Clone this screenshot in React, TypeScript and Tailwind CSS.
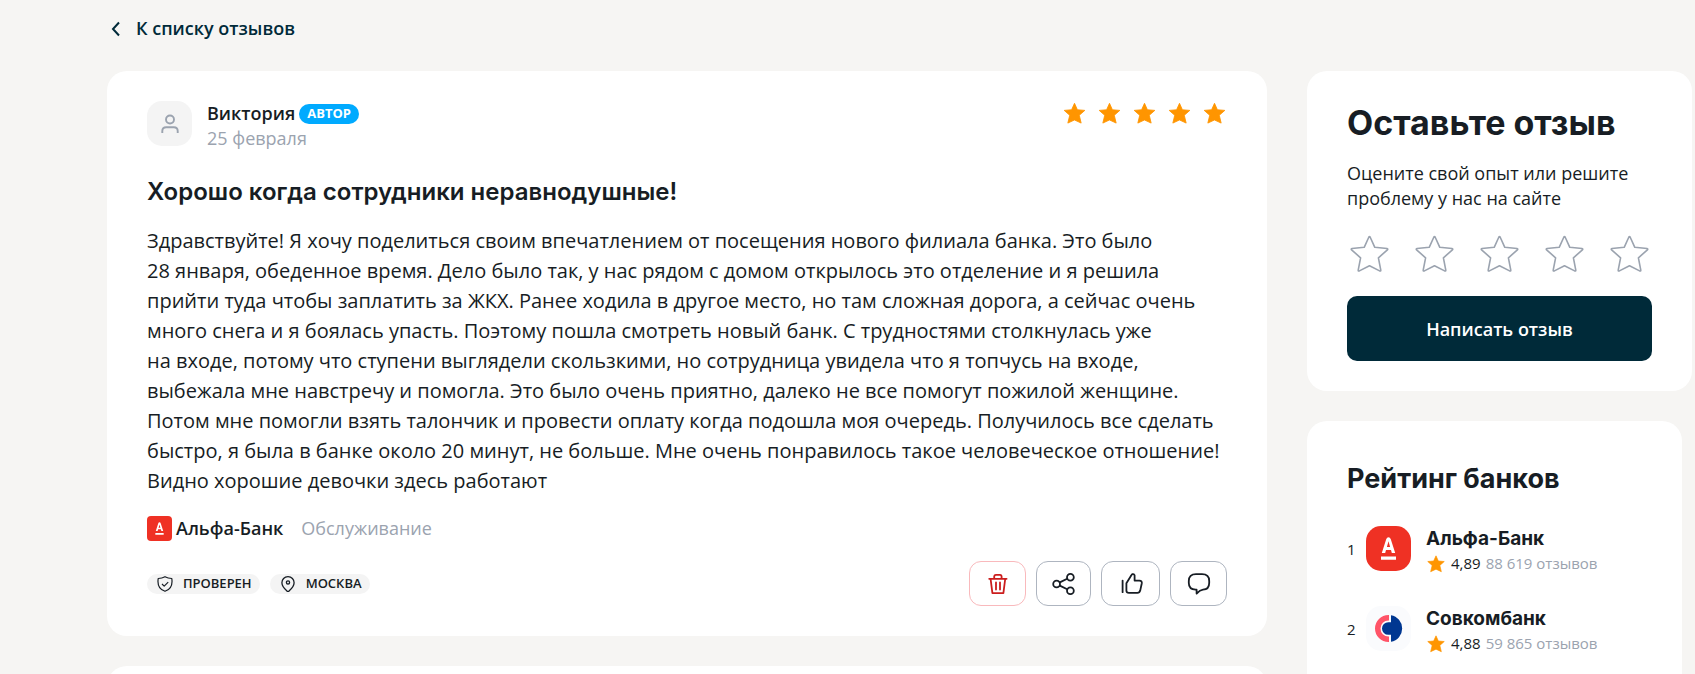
import type { ReactNode } from "react";

const STAR =
  "M12 2.2 L14.8 8.4 L21.9 9 L16.6 13.7 L18.4 21.2 L12 18.2 L5.6 21.2 L7.4 13.7 L2.1 9 L9.2 8.4 Z";

function SolidStar({ className }: { className: string }) {
  return (
    <svg viewBox="0 0 24 24" className={className} aria-hidden="true">
      <path d={STAR} fill="#ff9500" stroke="#ff9500" strokeWidth="0.8" strokeLinejoin="round" />
    </svg>
  );
}

function OutlineStar() {
  return (
    <svg viewBox="0 0 45 45" className="size-[45px]" fill="none" stroke="#9ba3af" strokeWidth="1.6" strokeLinejoin="round" aria-hidden="true">
      <path d="M21.9 6 Q22.5 5 23.1 6 L27.8 16.3 L40 17.5 Q41.3 17.8 40.4 18.9 L31.4 26.8 L33.8 39.2 Q33.8 40.4 32.6 39.9 L22.5 34.8 L12.4 39.9 Q11.2 40.4 11.2 39.2 L13.6 26.8 L4.6 18.9 Q3.7 17.8 5 17.5 L17.2 16.3 Z" />
    </svg>
  );
}

function AlfaLogo({ className }: { className: string }) {
  return (
    <svg viewBox="0 0 45 45" className={className} aria-hidden="true">
      <rect width="45" height="45" fill="#ef3124" />
      <path
        fill="#fff"
        fillRule="evenodd"
        d="M15 30.5h15v3.3H15z M15.8 27 L20.2 13.3 Q20.9 11.2 22.5 11.2 Q24.1 11.2 24.8 13.3 L29.2 27 H25.8 L25 24 H20 L19.2 27 Z M20.9 21 H24.1 L22.5 15.2 Z"
      />
    </svg>
  );
}

function SovcomLogo({ className }: { className: string }) {
  return (
    <svg viewBox="0 0 45 45" className={className} aria-hidden="true">
      <rect width="45" height="45" fill="#fafbfd" />
      <path fill="#ff5468" d="M23 9 V14.5 H22.5 A8 8 0 0 0 22.5 30.5 H23 V36 H22.5 A13.5 13.5 0 0 1 22.5 9 Z" />
      <path fill="#003791" d="M25 9.2 A13.5 13.5 0 0 1 25 35.8 V28.8 H22.3 A6.3 6.3 0 0 1 22.3 16.2 H25 Z" />
    </svg>
  );
}

function Chip({ icon, children }: { icon: ReactNode; children: ReactNode }) {
  return (
    <span className="flex h-5 items-center gap-2.5 rounded-full bg-[#f4f4f4] pr-2 pl-2.5 text-[13px] font-semibold uppercase">
      {icon}
      {children}
    </span>
  );
}

function Action({ label, tone, children }: { label: string; tone: string; children: ReactNode }) {
  return (
    <button type="button" aria-label={label} className={`flex h-[45px] items-center justify-center rounded-xl border bg-white ${tone}`}>
      <svg viewBox="0 0 24 24" className="size-6" fill="none" stroke="currentColor" strokeWidth="1.8" strokeLinecap="round" strokeLinejoin="round" aria-hidden="true">
        {children}
      </svg>
    </button>
  );
}

const BANKS = [
  { place: 1, name: "Альфа-Банк", rating: "4,89", reviews: "88 619 отзывов", Logo: AlfaLogo },
  { place: 2, name: "Совкомбанк", rating: "4,88", reviews: "59 865 отзывов", Logo: SovcomLogo },
];

export default function App() {
  return (
    <div className="h-screen overflow-hidden bg-[#f6f5f3] pr-[3px] pl-[107px] font-['Open_Sans','Noto_Sans',sans-serif] text-[#171d24]">
      <nav className="flex h-[71px] items-start pt-4">
        <a href="#reviews" className="flex items-center gap-[13px] text-lg/[25px] font-semibold text-[#002a39]">
          <svg viewBox="0 0 16 16" className="size-4" fill="none" stroke="currentColor" strokeWidth="2" aria-hidden="true">
            <path d="M12 1.5 L6 8 L12 14.5" />
          </svg>
          К списку отзывов
        </a>
      </nav>

      <div className="flex items-start gap-10">
        <main className="flex min-w-0 flex-1 flex-col gap-[30px]">
          <article className="rounded-[20px] bg-white px-10 py-[30px]">
            <header className="flex items-start">
              <span className="flex size-[45px] items-center justify-center rounded-[15px] bg-[#f4f4f4]">
                <svg viewBox="0 0 20 20" className="size-5" fill="none" stroke="#9ba3af" strokeWidth="1.9" aria-hidden="true">
                  <circle cx="10" cy="5.5" r="4" />
                  <path d="M2.3 19 V17 Q2.3 13.2 6.2 13.2 H13.8 Q17.7 13.2 17.7 17 V19" />
                </svg>
              </span>
              <div className="ml-[15px] text-lg/[25px]">
                <div className="flex items-center gap-1">
                  <span className="font-semibold">Виктория</span>
                  <span className="flex h-5 items-center rounded-full bg-[#00aaff] px-2 text-[13px] font-bold text-white">АВТОР</span>
                </div>
                <time className="text-[#9ba3af]">25 февраля</time>
              </div>
              <div className="ml-auto flex gap-2.5" role="img" aria-label="Оценка 5 из 5">
                {[1, 2, 3, 4, 5].map((n) => (
                  <SolidStar key={n} className="size-[25px]" />
                ))}
              </div>
            </header>

            <h1 className="mt-[26px] font-[Inter,sans-serif] text-2xl/[30px] font-semibold">
              Хорошо когда сотрудники неравнодушные!
            </h1>

            <p className="mt-[19px] text-xl/[30px]">
              Здравствуйте! Я хочу поделиться своим впечатлением от посещения нового филиала банка. Это было 28&nbsp;января,
              обеденное время. Дело было так, у&nbsp;нас рядом с&nbsp;домом открылось это отделение и&nbsp;я&nbsp;решила прийти
              туда чтобы заплатить за&nbsp;ЖКХ. Ранее ходила в&nbsp;другое место, но&nbsp;там сложная дорога, а&nbsp;сейчас
              очень много снега и&nbsp;я&nbsp;боялась упасть. Поэтому пошла смотреть новый банк. С&nbsp;трудностями столкнулась
              уже на&nbsp;входе, потому что ступени выглядели скользкими, но&nbsp;сотрудница увидела что я&nbsp;топчусь
              на&nbsp;входе, выбежала мне навстречу и&nbsp;помогла. Это было очень приятно, далеко не&nbsp;все помогут пожилой
              женщине. Потом мне помогли взять талончик и&nbsp;провести оплату когда подошла моя очередь. Получилось все сделать
              быстро, я&nbsp;была в&nbsp;банке около 20&nbsp;минут, не&nbsp;больше. Мне очень понравилось такое человеческое
              отношение! Видно хорошие девочки здесь работают
            </p>

            <div className="mt-5 flex items-center text-lg/[25px]">
              <AlfaLogo className="size-[25px] rounded" />
              <span className="ml-1 font-semibold">Альфа-Банк</span>
              <span className="ml-[18px] text-[#9ba3af]">Обслуживание</span>
            </div>

            <footer className="mt-5 flex items-center justify-between">
              <div className="flex gap-2.5">
                <Chip
                  icon={
                    <svg viewBox="0 0 16 16" className="size-4" fill="none" stroke="currentColor" strokeWidth="1.2" strokeLinejoin="round" aria-hidden="true">
                      <path d="M8 0.7 Q11 2.2 14.8 2.5 C15.7 8.5 13.4 13.6 8 15.3 C2.6 13.6 0.3 8.5 1.2 2.5 Q5 2.2 8 0.7 Z" />
                      <path d="M5 8 L7.2 10.2 L11.2 6.2" />
                    </svg>
                  }
                >
                  Проверен
                </Chip>
                <Chip
                  icon={
                    <svg viewBox="0 0 16 16" className="size-4" fill="none" stroke="currentColor" strokeWidth="1.3" strokeLinejoin="round" aria-hidden="true">
                      <path d="M8 0.7 C4.3 0.7 1.9 3.5 1.9 6.8 C1.9 10.2 5 13.3 7 15.1 Q8 15.8 9 15.1 C11 13.3 14.1 10.2 14.1 6.8 C14.1 3.5 11.7 0.7 8 0.7 Z" />
                      <circle cx="8" cy="6.4" r="1.6" />
                    </svg>
                  }
                >
                  Москва
                </Chip>
              </div>
              <div className="flex gap-2.5">
                <Action label="Удалить" tone="w-[57px] border-[#f9b9bc] text-[#cb1d1d]">
                  <path d="M3.2 6.8 H20.6 M8.2 6.5 V4.8 Q8.2 2.8 10 2.8 H14 Q15.6 2.8 15.6 4.8 V6.5 M4.6 7 L6.4 21.2 H17.4 L19.2 7 M10 10.5 V17.5 M14 10.5 V17.5" />
                </Action>
                <Action label="Поделиться" tone="w-[55px] border-[#aeb5c0]">
                  <circle cx="4.6" cy="12" r="3.4" />
                  <circle cx="18.4" cy="5.2" r="3.4" />
                  <circle cx="18.4" cy="18.8" r="3.4" />
                  <path d="M7.8 10.4 L15.2 6.7 M7.8 13.6 L15.2 17.3" />
                </Action>
                <Action label="Нравится" tone="w-[59px] border-[#aeb5c0]">
                  <path d="M3.6 8.6 V20.2 M7.4 18.5 V11.2 L12.2 3.6 Q13.2 1.4 15 2.4 Q16 3 15.6 4.6 V8.6 H20.4 Q23.2 8.8 22.8 11.2 L21.2 18.6 Q20.6 20.9 18.4 20.9 H10 Q7.4 20.9 7.4 18.5" />
                </Action>
                <Action label="Комментировать" tone="w-[57px] border-[#aeb5c0]">
                  <path d="M9 2.2 H15 Q22.2 2.2 22.2 9 V11 Q22.2 17.4 16 17.7 Q13 18 9.6 21.6 V17.7 H8.6 Q1.8 17.4 1.8 11 V9 Q1.8 2.2 9 2.2 Z" />
                </Action>
              </div>
            </footer>
          </article>

          <section className="h-40 rounded-[20px] bg-white" aria-label="Комментарии" />
        </main>

        <aside className="flex w-[385px] shrink-0 flex-col gap-[30px]">
          <section className="rounded-[20px] bg-white px-10 py-[30px]">
            <h2 className="pt-0.5 font-[Inter,sans-serif] text-[34px]/[40px] font-bold whitespace-nowrap">Оставьте отзыв</h2>
            <p className="mt-[18px] text-lg/[25px]">Оцените свой опыт или решите проблему у&nbsp;нас на&nbsp;сайте</p>
            <div className="mt-5 flex gap-5">
              {[1, 2, 3, 4, 5].map((n) => (
                <button key={n} type="button" aria-label={`Оценка ${n}`}>
                  <OutlineStar />
                </button>
              ))}
            </div>
            <button type="button" className="mt-5 h-[65px] w-full rounded-[10px] bg-[#002a39] text-lg font-semibold text-white">
              Написать отзыв
            </button>
          </section>

          <section className="mr-2.5 rounded-[20px] bg-white p-10">
            <h2 className="font-[Inter,sans-serif] text-[27px]/[35px] font-bold">Рейтинг банков</h2>
            <ol className="mt-[30px] flex flex-col gap-[30px]">
              {BANKS.map(({ place, name, rating, reviews, Logo }) => (
                <li key={place} className="flex h-[50px] items-start">
                  <span className="w-[19px] text-[15px]/[47px]">{place}</span>
                  <Logo className="size-[45px] rounded-[15px]" />
                  <div className="ml-[15px]">
                    <h3 className="font-[Inter,sans-serif] text-[19px]/[25px] font-bold">{name}</h3>
                    <p className="flex items-center gap-[5px] text-[15px]/[25px]">
                      <SolidStar className="size-5" />
                      <span>{rating}</span>
                      <span className="text-[#9ba3af]">{reviews}</span>
                    </p>
                  </div>
                </li>
              ))}
            </ol>
          </section>
        </aside>
      </div>
    </div>
  );
}
